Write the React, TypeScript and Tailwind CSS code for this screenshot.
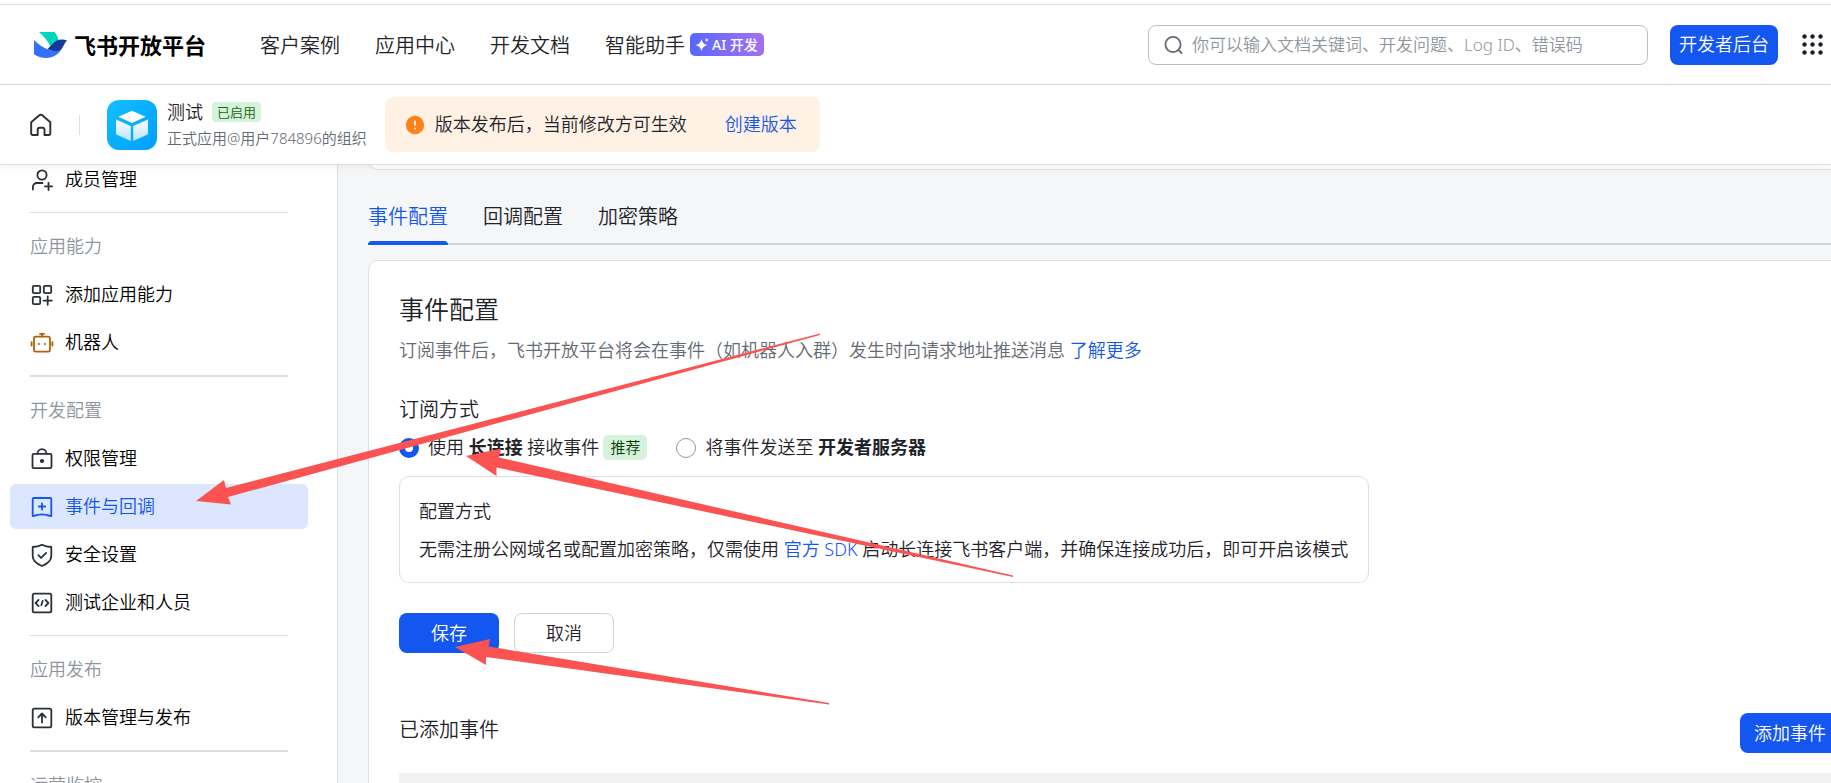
import React from 'react';

type IconName = 'member' | 'grid' | 'robot' | 'lock' | 'event' | 'shield' | 'code' | 'publish';

interface MenuItem {
  label: string;
  icon: IconName;
}

interface MenuGroup {
  title?: string;
  items: MenuItem[];
}

const NAV_LINKS = ['客户案例', '应用中心', '开发文档', '智能助手'];

const TABS = ['事件配置', '回调配置', '加密策略'];

const MENU: MenuGroup[] = [
  { items: [{ label: '成员管理', icon: 'member' }] },
  {
    title: '应用能力',
    items: [
      { label: '添加应用能力', icon: 'grid' },
      { label: '机器人', icon: 'robot' },
    ],
  },
  {
    title: '开发配置',
    items: [
      { label: '权限管理', icon: 'lock' },
      { label: '事件与回调', icon: 'event' },
      { label: '安全设置', icon: 'shield' },
      { label: '测试企业和人员', icon: 'code' },
    ],
  },
  { title: '应用发布', items: [{ label: '版本管理与发布', icon: 'publish' }] },
  { title: '运营监控', items: [] },
];

const ICON_PATHS: Record<IconName, React.ReactNode> = {
  member: (
    <>
      <circle cx="12" cy="7" r="4.6" />
      <path d="M2.9 21.5V19a4 4 0 0 1 4-4h5.6M18.5 14.8v7.2M14.9 18.4h7.2" />
    </>
  ),
  grid: (
    <>
      <rect x="2.8" y="2.8" width="7.4" height="7.4" rx="1.2" />
      <rect x="13.8" y="2.8" width="7.4" height="7.4" rx="1.2" />
      <rect x="2.8" y="13.8" width="7.4" height="7.4" rx="1.2" />
      <path d="M17.7 13.4v8.4M13.5 17.6h8.4" />
    </>
  ),
  robot: (
    <>
      <rect x="4" y="5.6" width="16" height="15" rx="1.8" />
      <path d="M12 5.4V3M10 2.9h4M1.6 11.2v3.4M22.4 11.2v3.4" />
      <path d="M8.2 13h1.6M14.2 13h1.6" strokeWidth="2.2" strokeLinecap="butt" />
    </>
  ),
  lock: (
    <>
      <rect x="2.5" y="6.8" width="19" height="14.4" rx="1.4" />
      <path d="M7.6 6.6a4.4 4.4 0 0 1 8.8 0" />
      <circle cx="12" cy="14" r="1.2" fill="currentColor" />
    </>
  ),
  event: (
    <path d="M3.9 3h16.2a1.2 1.2 0 0 1 1.2 1.2v16.9L16.6 20c-3-.8-6.2-.8-9.2 0l-4.7 1.100V4.200A1.200 1.200 0 0 1 3.900 3ZM12 8.300v6.400M8.800 11.500h6.400" />
  ),
  shield: (
    <>
      <path d="M12 1.800c2.600 1.500 5.800 2.200 9.300 2.200v9.100c0 4.600-4.500 8-9.300 9.900-4.800-1.900-9.300-5.300-9.300-9.900V4c3.500 0 6.700-.7 9.300-2.200Z" />
      <path d="m8.300 12.200 2.800 2.700 5-5" />
    </>
  ),
  code: (
    <>
      <rect x="2.7" y="2.7" width="18.6" height="18.6" rx="1.6" />
      <path d="m8.600 8.900-3 3.100 3 3.100M15.400 8.900l3 3.100-3 3.100M12.700 9.800l-1.400 4.400" />
    </>
  ),
  publish: (
    <>
      <rect x="2.7" y="2.7" width="18.6" height="18.6" rx="1.6" />
      <path d="M12 16.600V7.800M8.200 11.300 12 7.500l3.800 3.800" />
    </>
  ),
};

function MenuIcon({ name }: { name: IconName }) {
  return (
    <svg
      className="w-6 h-6 shrink-0"
      viewBox="0 0 24 24"
      fill="none"
      stroke="currentColor"
      strokeWidth="1.8"
      strokeLinecap="round"
      strokeLinejoin="round"
      aria-hidden="true"
    >
      {ICON_PATHS[name]}
    </svg>
  );
}

function Logo() {
  return (
    <a href="#" className="flex items-center gap-[7px] shrink-0">
      <svg width="33" height="27" viewBox="0 0 33 27" aria-hidden="true">
        <path d="M5 1h15.500c2 2 3.300 5 4 8.200-2.500 1.200-5 3.600-7.500 6.800C14 10.500 10 5.300 5 1Z" fill="#00d6b9" />
        <path d="M0 9c4.500 4.500 9.500 8 15.500 9.900 4 1.100 8.500.9 12-.9C24.500 23.500 19 27 12.500 27 7.500 27 3.200 25.500 0 23.300V9Z" fill="#3370ff" />
        <path d="M13.500 18c2.500-2.300 5.500-6.300 9-8.200 3.300-1.700 7-1.700 10.500-.4-2.300 2-3.300 5.300-5 8.100-2.500 3.500-9.500 3.300-14.500.5Z" fill="#133c9a" />
      </svg>
      <span className="text-[22px] leading-8 font-bold text-black">飞书开放平台</span>
    </a>
  );
}

function Header() {
  return (
    <header className="flex items-center h-20 pl-[34px] pr-2 border-b border-[#dcdee0] bg-white">
      <Logo />
      <nav className="flex items-center gap-[35px] ml-[54px] pt-0.5 text-[20px] leading-8 whitespace-nowrap">
        {NAV_LINKS.map((label) => (
          <a key={label} href="#">{label}</a>
        ))}
      </nav>
      <span className="flex items-center gap-[3px] h-[23px] w-[74px] ml-[5px] pl-[5px] rounded-[5px] bg-linear-to-r from-[#5666ff] to-[#a270ee] text-white text-[14px] font-medium whitespace-nowrap shrink-0">
        <svg width="14" height="14" viewBox="0 0 14 14" fill="currentColor" aria-hidden="true">
          <path d="M6.500 1c.9 3.600 2.200 5 6 6.100-3.800 1.100-5.100 2.500-6 6.200C5.600 9.600 4.300 8.200.5 7.100 4.300 6 5.600 4.600 6.500 1ZM11.800 0c.3 1.300.8 1.700 2 2-1.200.4-1.700.8-2 2-.3-1.200-.8-1.600-2-2 1.200-.3 1.700-.7 2-2Z" />
        </svg>
        AI 开发
      </span>

      <div className="flex items-center ml-auto">
        <label className="flex items-center gap-[9px] w-[500px] h-10 px-[15px] border border-[#bbbfc4] rounded-lg">
          <svg width="19" height="20" viewBox="0 0 19 20" fill="none" stroke="#646a73" strokeWidth="1.8" strokeLinecap="round" aria-hidden="true">
            <circle cx="9" cy="9.500" r="7.600" />
            <path d="m14.500 15 3 3" />
          </svg>
          <input
            type="text"
            aria-label="搜索"
            placeholder="你可以输入文档关键词、开发问题、Log ID、错误码"
            className="flex-1 min-w-0 text-[17px] outline-none placeholder:text-[#8f959e]"
          />
        </label>
        <button className="w-[108px] h-10 ml-[22px] rounded-lg bg-[#1456f0] text-white text-[18px] whitespace-nowrap">
          开发者后台
        </button>
        <button aria-label="更多应用" className="ml-6 text-[#1f2329]">
          <svg width="21" height="21" viewBox="0 0 21 21" fill="currentColor" aria-hidden="true">
            {[2.5, 10.5, 18.5].map((y) =>
              [2.5, 10.5, 18.5].map((x) => <circle key={`${x}-${y}`} cx={x} cy={y} r="2.2" />),
            )}
          </svg>
        </button>
      </div>
    </header>
  );
}

function AppIcon() {
  return (
    <svg className="w-[50px] h-[50px] shrink-0" viewBox="0 0 50 50" aria-hidden="true">
      <defs>
        <linearGradient id="app-bg" x1="0" y1="0" x2="1" y2="1">
          <stop offset="0" stopColor="#12bfff" />
          <stop offset="1" stopColor="#009fff" />
        </linearGradient>
        <linearGradient id="app-side" x1="0" y1="0" x2="0" y2="1">
          <stop offset="0" stopColor="#ffffff" />
          <stop offset="1" stopColor="#b5e5ff" />
        </linearGradient>
      </defs>
      <rect width="50" height="50" rx="12" fill="url(#app-bg)" />
      <path d="M25 10.700 38.600 16.800 25 23 11.400 16.800 25 10.700Z" fill="#fff" />
      <path d="M9 19.400 23.800 26v15L10 34.800c-.6-.3-1-.8-1-1.500V19.400Z" fill="url(#app-side)" />
      <path d="M41 19.400 26.200 26v15L40 34.800c.6-.3 1-.8 1-1.500V19.400Z" fill="url(#app-side)" />
    </svg>
  );
}

function AppBar() {
  return (
    <div className="relative z-10 flex items-center h-20 pl-[29px] border-b border-[#dcdee0] bg-white shadow-[0_2px_10px_rgba(31,35,41,0.06)] whitespace-nowrap">
      <a href="#" aria-label="首页">
        <svg width="24" height="24" viewBox="0 0 24 24" fill="none" stroke="#2b2f36" strokeWidth="1.9" strokeLinejoin="round" aria-hidden="true">
          <path d="M2.200 9.200 10.300 2.300c.9-.7 2.100-.7 3 0l8 6.900v11.600c0 .7-.5 1.200-1.200 1.200h-4.600v-5.500a1.800 1.800 0 0 0-1.800-1.800h-3.200a1.800 1.800 0 0 0-1.800 1.800V22H3.400c-.7 0-1.200-.5-1.200-1.200V9.200Z" />
        </svg>
      </a>
      <span className="w-px h-5 ml-[26px] bg-[#dcdee0]" />
      <div className="flex items-center gap-[10px] ml-[27px]">
        <AppIcon />
        <div>
          <div className="flex items-center gap-[9px]">
            <span className="text-[18px] leading-[26px]">测试</span>
            <span className="px-[5px] h-5 leading-5 rounded bg-[#d5f2db] text-[#186010] text-[13px]">已启用</span>
          </div>
          <p className="text-[15px] leading-[26px] text-[#646a73]">正式应用@用户784896的组织</p>
        </div>
      </div>
      <div className="flex items-center h-[55px] ml-[18px] px-5 rounded-lg bg-[#fff2e5] text-[18px]">
        <svg width="20" height="20" viewBox="0 0 20 20" aria-hidden="true">
          <circle cx="10" cy="10" r="9.200" fill="#ff811a" />
          <path d="M10 5.800v4.800M10 12.700v1.600" stroke="#fff" strokeWidth="1.8" />
        </svg>
        <span className="ml-[10px]">版本发布后，当前修改方可生效</span>
        <a href="#" className="ml-[38px] mr-[3px] text-[#1456f0]">创建版本</a>
      </div>
    </div>
  );
}

function Sidebar() {
  return (
    <aside className="w-[338px] shrink-0 overflow-hidden bg-white border-r border-[#dcdee0]">
      <div className="-mt-2 pl-[10px] pr-[29px]">
        {MENU.map(({ title, items }, i) => (
          <div key={title ?? 'base'}>
            {i > 0 && (
              <hr className={`mx-5 mt-[10px] border-[#dcdee0] ${i % 2 ? 'mb-[11px]' : 'mb-[11px] border-t-2'}`} />
            )}
            <div className="flex flex-col gap-[3px]">
              {title && (
                <p className="h-[45px] leading-[45px] pl-5 text-[18px] text-[#8f959e]">{title}</p>
              )}
              {items.map(({ label, icon }) => {
                const active = icon === 'event';
                return (
                  <a
                    key={label}
                    href="#"
                    className={`flex items-center gap-[11px] h-[45px] pl-5 rounded-md text-[18px] ${active ? 'bg-[#dce6ff] text-[#1456f0]' : 'text-black'}`}
                  >
                    <span className={icon === 'robot' ? 'text-[#b26206]' : active ? 'text-[#1456f0]' : 'text-[#2b2f36]'}>
                      <MenuIcon name={icon} />
                    </span>
                    {label}
                  </a>
                );
              })}
            </div>
          </div>
        ))}
      </div>
    </aside>
  );
}

const RADIO =
  'appearance-none w-5 h-5 shrink-0 rounded-full bg-white border border-[#8f959e] checked:border-[6px] checked:border-[#1456f0]';

function EventConfig() {
  return (
    <section className="mt-[15px] p-[30px] bg-white border border-[#dcdee0] rounded-[10px]">
      <h2 className="text-[25px] leading-9">事件配置</h2>
      <p className="mt-[9px] text-[18px] leading-7 text-[#646a73]">
        订阅事件后，飞书开放平台将会在事件（如机器人入群）发生时向请求地址推送消息{' '}
        <a href="#" className="text-[#1456f0]">了解更多</a>
      </p>

      <h3 className="mt-[31px] text-[20px] leading-[30px]">订阅方式</h3>
      <div className="flex items-center gap-[29px] h-[25px] mt-[10px] text-[18px] whitespace-nowrap">
        <label className="flex items-center">
          <input type="radio" name="mode" defaultChecked className={RADIO} />
          <span className="ml-[9px]">使用 <strong className="font-bold">长连接</strong> 接收事件</span>
          <span className="ml-1 px-[7px] h-[25px] leading-[25px] rounded-[5px] bg-[#d5f2db] text-[#0c3b06] text-[15px]">推荐</span>
        </label>
        <label className="flex items-center">
          <input type="radio" name="mode" className={RADIO} />
          <span className="ml-[9px]">将事件发送至 <strong className="font-bold">开发者服务器</strong></span>
        </label>
      </div>

      <div className="max-w-[970px] mt-4 px-[19px] pt-5 pb-[19px] border border-[#dcdee0] rounded-[10px] text-[18px] leading-7">
        <h4>配置方式</h4>
        <p className="mt-[10px] whitespace-nowrap">
          无需注册公网域名或配置加密策略，仅需使用 <a href="#" className="text-[#1456f0]">官方 SDK</a>{' '}
          启动长连接飞书客户端，并确保连接成功后，即可开启该模式
        </p>
      </div>

      <div className="flex gap-[15px] mt-[30px] text-[18px]">
        <button className="w-[100px] h-10 rounded-lg bg-[#1456f0] text-white">保存</button>
        <button className="w-[100px] h-10 rounded-lg border border-[#d0d3d6] bg-white">取消</button>
      </div>

      <div className="flex items-start justify-between mt-[60px]">
        <h3 className="text-[20px] leading-[34px]">已添加事件</h3>
        <button className="w-[100px] h-10 rounded-lg bg-[#1456f0] text-white text-[18px]">添加事件</button>
      </div>
      <div className="h-[50px] mt-5 bg-[#f1f2f4]" />
    </section>
  );
}

// Hand-drawn pointers laid over the page
function Pointers() {
  return (
    <svg className="absolute inset-0 z-20 w-full h-full pointer-events-none" fill="#fb5252" aria-hidden="true">
      <path d="M196 501 224 480 226 488 820 333.500 820 335 228 497 231 504.500Z" />
      <path d="M466 456 501 448.500 499 457.500 1013 575.500 1013 577 496.500 467.500 496.500 476Z" />
      <path d="M455 647 490 639 488.500 646.500 829 703 829 704.500 486 657 486 665Z" />
    </svg>
  );
}

export default function App() {
  return (
    <div className="relative flex flex-col h-screen overflow-hidden bg-white font-[350] text-[#1f2329] font-['Noto_Sans','Noto_Sans_CJK_SC',sans-serif]">
      <div className="h-[5px] shrink-0 border-b border-[#dcdee0]" />
      <Header />
      <AppBar />
      <div className="flex flex-1 min-h-0">
        <Sidebar />
        <main className="flex-1 min-w-0 overflow-hidden pl-[30px] bg-[#f5f6f8]">
          {/* the content column runs past the right edge of the viewport */}
          <div className="-mr-10">
            <div className="h-5 -mt-[15px] border border-[#dcdee0] rounded-[10px] bg-white" />
            <div role="tablist" className="flex gap-[35px] mt-[23px] border-b-2 border-[#d0d3d6] text-[20px]">
              {TABS.map((label, i) => (
                <button
                  key={label}
                  role="tab"
                  aria-selected={i === 0}
                  className={`relative h-[52px] -mb-0.5 pb-1 ${i === 0 ? 'text-[#1456f0]' : ''}`}
                >
                  {label}
                  {i === 0 && <span className="absolute inset-x-0 bottom-0 h-1 rounded-t bg-[#1456f0]" />}
                </button>
              ))}
            </div>
            <EventConfig />
          </div>
        </main>
      </div>
      <Pointers />
    </div>
  );
}
